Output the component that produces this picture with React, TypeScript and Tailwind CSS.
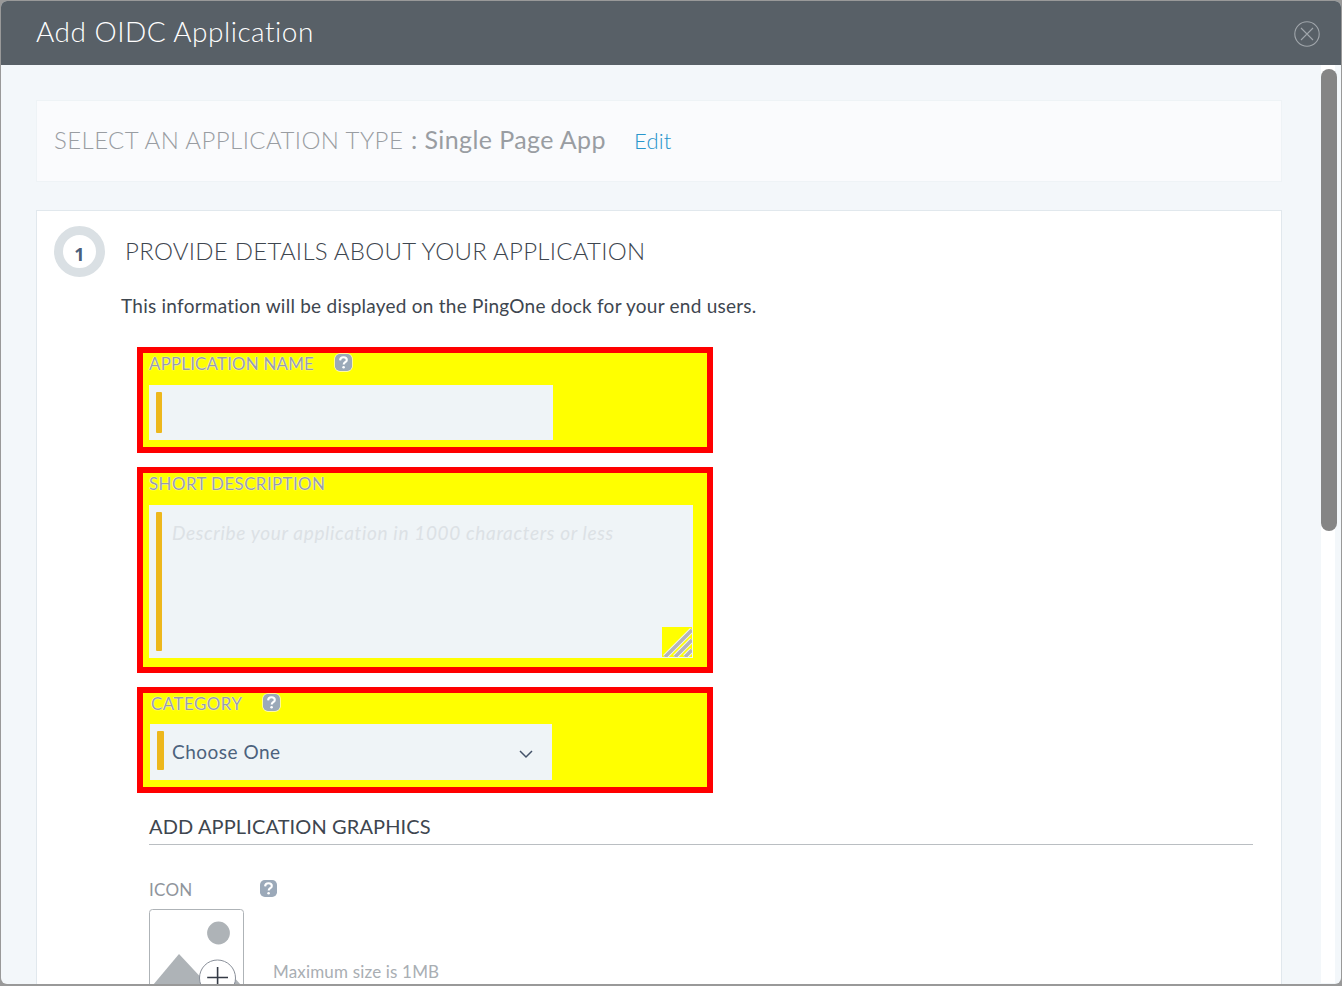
import React from "react";

const halo = "[text-shadow:0_0_1px_#ffffff,0_0_1px_#ffffff]";

function HelpIcon({ outlined = false }: { outlined?: boolean }) {
  return (
    <svg width="19" height="19" viewBox="0 0 19 19" className="block shrink-0">
      {outlined && <rect x="0.3" y="0.3" width="18.4" height="18.4" rx="5.5" fill="#fffbd0" />}
      <rect x="1" y="1" width="17" height="17" rx="4.8" fill="#9ba9b9" />
      <path
        d="M6.1 7.4C6.2 5.2 7.6 4.2 9.5 4.2c2 0 3.3 1.1 3.3 2.7 0 2.3-3.1 2.3-3.1 4.5"
        fill="none"
        stroke="#fff"
        strokeWidth="2.1"
      />
      <circle cx="9.6" cy="14.2" r="1.3" fill="#fff" />
    </svg>
  );
}

function Highlight({ className, children }: { className: string; children: React.ReactNode }) {
  return (
    <section className={`w-[576px] border-[6px] border-[#ff0000] bg-[#ffff00] pl-1.5 ${className}`}>
      {children}
    </section>
  );
}

function ImagePlaceholder() {
  return (
    <svg width="95" height="95" viewBox="0 0 95 95" className="block shrink-0">
      <rect x="0.5" y="0.5" width="94" height="94" rx="3" fill="#fff" stroke="#aeb3b7" />
      <circle cx="69.5" cy="24" r="11.4" fill="#aeb3b7" />
      <path d="M30 45L4 76H59Z" fill="#aeb3b7" />
      <path d="M83 66L75 76H92Z" fill="#aeb3b7" />
      <circle cx="68.5" cy="69" r="18" fill="#fff" stroke="#888e98" />
      <path d="M58.2 68.5H79M68.6 58V79" stroke="#353b46" strokeWidth="1.6" />
    </svg>
  );
}

export default function App() {
  return (
    <div className="h-[986px] w-[1342px] overflow-hidden bg-[#999999] px-px pt-px pb-0.5 font-['Lato','Open_Sans',sans-serif]">
      <div className="flex h-[983px] flex-col overflow-hidden rounded-[6px] bg-[#f3f7fa] whitespace-nowrap">
        <header className="flex h-16 shrink-0 items-center justify-between bg-[#586067] pr-[20px] pl-[35px]">
          <h1 className="pb-1 text-[28px] leading-8 font-light tracking-[0.5px] text-white">Add OIDC Application</h1>
          <svg width="28" height="28" viewBox="0 0 28 28" className="mt-0.5">
            <circle cx="14" cy="14" r="12.2" fill="none" stroke="#a0a6ab" strokeWidth="1.1" />
            <path d="M8 8L20 20M20 8L8 20" stroke="#a0a6ab" strokeWidth="1.1" />
          </svg>
        </header>

        <div className="flex min-h-0 flex-1">
          <main className="flex w-[1320px] flex-col pt-[35px] pr-[39px] pl-[35px]">
            <div className="flex h-[82px] shrink-0 items-center border border-[#eef3f6] bg-[#fafbfd] pb-0.5 pl-[17px] text-[#999da2]">
              <span className="w-[357px] text-[24px] font-light tracking-[0.42px]">SELECT AN APPLICATION TYPE</span>
              <span className="w-[223px] text-[25px] tracking-[0.4px]">: Single Page App</span>
              <a className="text-[22px] font-light tracking-[0.2px] text-[#2996cc]">Edit</a>
            </div>

            <div className="mt-7 h-[800px] shrink-0 border border-[#e1e8ed] bg-white">
              <div className="mt-[15px] flex items-center pl-[17px]">
                <div className="flex size-[51px] items-center justify-center rounded-full border-[9px] border-[#dae0e4] pt-1 font-['Open_Sans',sans-serif] text-[18px] leading-6 font-bold text-[#4a5f7c]">
                  1
                </div>
                <h2 className="ml-5 pb-0.5 text-[24px] leading-8 font-light tracking-[0.26px] text-[#3e464f]">
                  PROVIDE DETAILS ABOUT YOUR APPLICATION
                </h2>
              </div>
              <p className="mt-[17px] ml-[84px] text-[19px] leading-6 tracking-[0.245px] text-[#3e464f]">
                This information will be displayed on the PingOne dock for your end users.
              </p>

              <div className="mt-[29px] ml-[100px] flex flex-col gap-3.5">
                <Highlight className="h-[106px]">
                  <div className="flex h-8">
                    <label className={`w-[185px] text-[17px] leading-[22px] tracking-[0.13px] text-[#9a9da5] ${halo}`}>
                      APPLICATION NAME
                    </label>
                    <HelpIcon outlined />
                  </div>
                  <div className="h-[55px] w-[404px] bg-[#eff4f7] py-[7px] pl-[7px]">
                    <div className="h-[41px] w-1.5 rounded-[1px] bg-[#edb71c]" />
                  </div>
                </Highlight>

                <Highlight className="h-[206px]">
                  <div className="h-8">
                    <label className={`block text-[17px] leading-[22px] tracking-[0.36px] text-[#9a9da5] ${halo}`}>
                      SHORT DESCRIPTION
                    </label>
                  </div>
                  <div className="flex h-[153px] w-[544px] bg-[#eff4f7] py-[7px] pl-[7px]">
                    <div className="h-[139px] w-1.5 rounded-[1px] bg-[#edb71c]" />
                    <p className="mt-[9px] ml-[10px] w-[490px] text-[19px] leading-6 tracking-[0.66px] text-[#dce1e5] italic">
                      Describe your application in 1000 characters or less
                    </p>
                    <svg width="31" height="31" viewBox="0 0 31 31" className="-mb-[7px] shrink-0 self-end">
                      <path d="M0 0H30V30H0Z" fill="#ffff00" />
                      <path d="M3 30L30 3M13 30L30 13M23 30L30 23" stroke="#f6f6ee" strokeWidth="5.4" />
                      <path d="M3 30L30 3M13 30L30 13M23 30L30 23" stroke="#b4b4ba" strokeWidth="3.6" />
                      <path d="M30 0H31V31H0V30H30Z" fill="#eff4f7" />
                    </svg>
                  </div>
                </Highlight>

                <Highlight className="h-[106px]">
                  <div className="flex h-[31px] pl-0.5">
                    <label className={`w-[111px] text-[17px] leading-[22px] tracking-[0.42px] text-[#9a9da5] ${halo}`}>
                      CATEGORY
                    </label>
                    <HelpIcon outlined />
                  </div>
                  <div className="ml-px flex h-14 w-[402px] items-center bg-[#eff4f7] pl-[7px]">
                    <div className="mb-[3px] h-[39px] w-[7px] rounded-[1px] bg-[#edb71c]" />
                    <span className="ml-2 flex-1 text-[19px] leading-6 tracking-[0.5px] text-[#4c627d]">Choose One</span>
                    <svg width="16" height="10" viewBox="0 0 16 10" className="mt-[3px] mr-[18px]">
                      <path d="M2 2L8 8L14 2" fill="none" stroke="#435269" strokeWidth="1.5" />
                    </svg>
                  </div>
                </Highlight>
              </div>

              <div className="mt-[21px] ml-28 w-[1104px] border-b border-[#babec2] pb-1.5">
                <h3 className="text-[20px] leading-6 tracking-[0.12px] text-[#3e464f]">ADD APPLICATION GRAPHICS</h3>
              </div>

              <div className="mt-[34px] ml-28 flex h-[30px]">
                <span className="w-[110px] text-[17px] leading-[22px] tracking-[0.25px] text-[#8f959c]">ICON</span>
                <HelpIcon />
              </div>
              <div className="ml-28 flex">
                <ImagePlaceholder />
                <span className="mt-[52px] ml-[29px] text-[17px] leading-[22px] tracking-[0.17px] text-[#a9aeb3]">
                  Maximum size is 1MB
                </span>
              </div>
            </div>
          </main>

          <div className="h-[918px] w-4 shrink-0 bg-[linear-gradient(to_right,#ffffff_14px,transparent_14px)] pt-1">
            <div className="h-[462px] w-4 rounded-full bg-[#858585]" />
          </div>
        </div>
      </div>
    </div>
  );
}
